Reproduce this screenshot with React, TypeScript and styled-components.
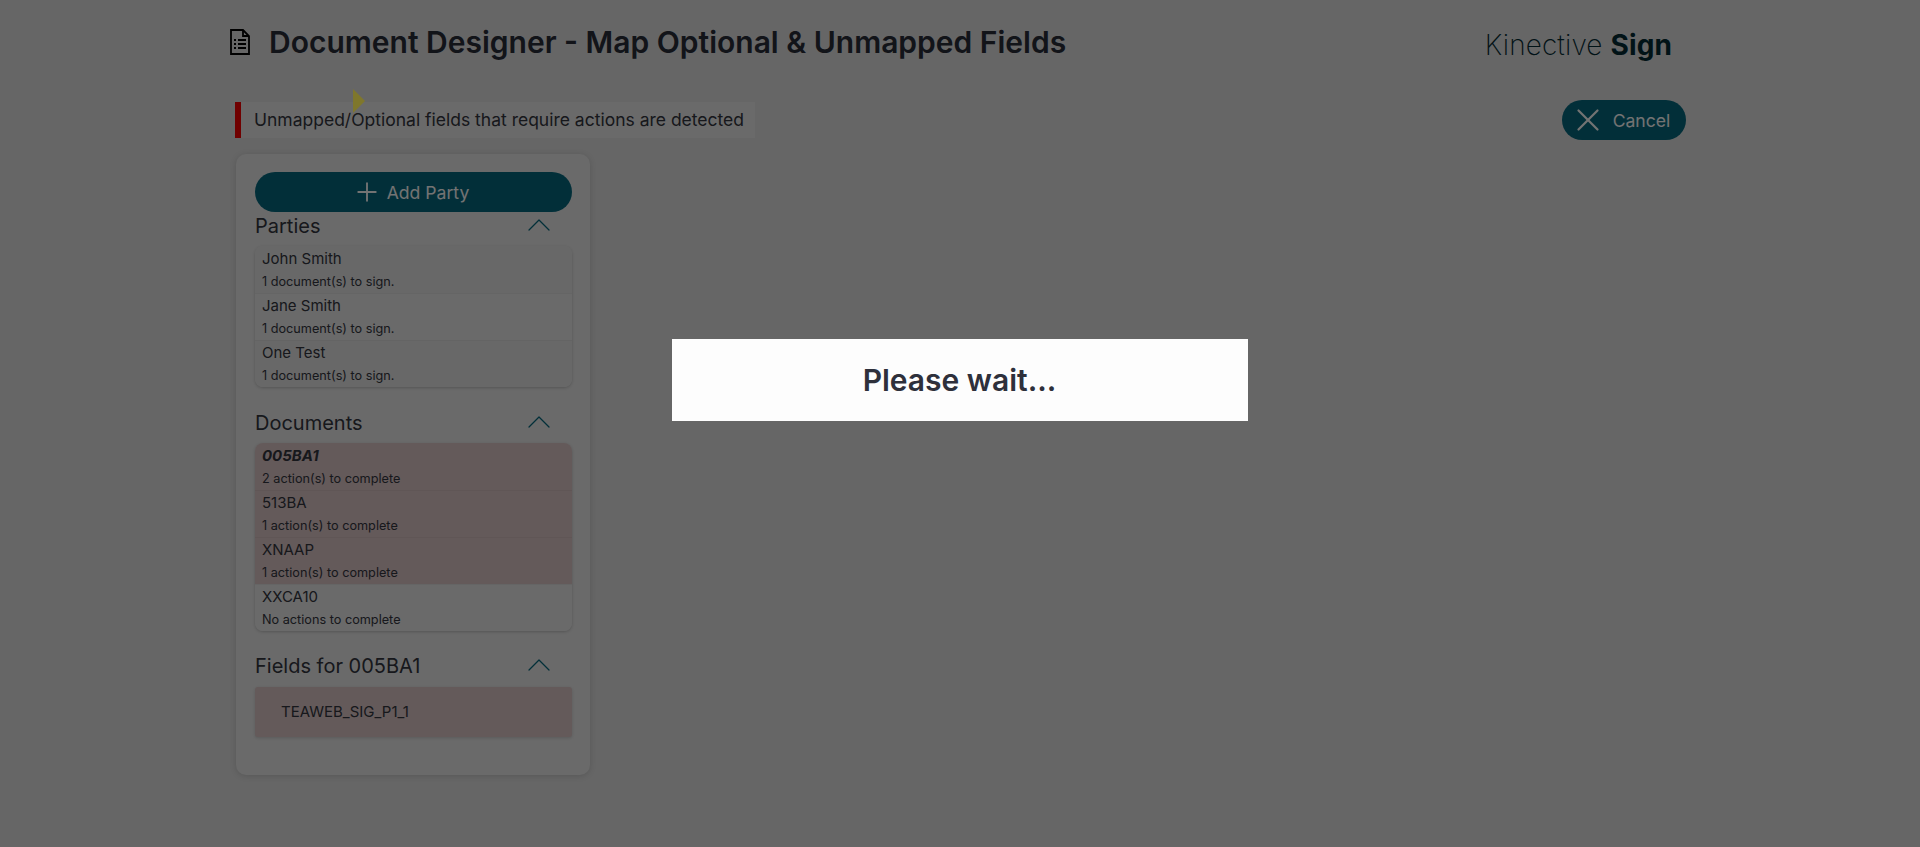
import { createGlobalStyle } from "styled-components";
import styled from "styled-components";
import { Plus, X, ChevronUp } from "lucide-react";

const GlobalStyle = createGlobalStyle`
  html, body {
    margin: 0;
    padding: 0;
    background: #cccccc;
    font-family: Inter, "Liberation Sans", sans-serif;
    color: #2e3038;
  }
`

const Page = styled.div`
  height: 847px;
  overflow: hidden;
  padding: 0 234px 0 228px;
  box-sizing: border-box;
`
const Header = styled.header`
  display: flex;
  justify-content: space-between;
  height: 102px;
`
const TitleGroup = styled.div`
  display: flex;
  align-items: flex-start;
  gap: 17px;
  padding-top: 24px;
`
const DocIcon = styled.svg`
  width: 24px;
  height: 28px;
  margin-top: 4px;
`
const Title = styled.h1`
  margin: 0;
  font-size: 30px;
  line-height: 36px;
  font-weight: 600;
  color: #252833;
`
const Logo = styled.div`
  font-size: 28px;
  line-height: 36px;
  font-weight: 200;
  letter-spacing: 0.1px;
  color: #02262e;
  padding: 27px 14px 0 0;
`
const LogoStrong = styled.span`
  font-weight: 700;
`
const ActionRow = styled.div`
  display: flex;
  justify-content: space-between;
  align-items: flex-start;
  height: 52px;
`
const Alert = styled.div`
  margin-left: 7px;
  width: 520px;
  height: 36px;
  box-sizing: border-box;
  display: flex;
  align-items: center;
  padding: 0 0 2px 13px;
  border-left: 6px solid #e00000;
  background: #d5d5d5;
  font-size: 17.5px;
  color: #2e3038;
`
const PillButton = styled.button`
  display: flex;
  align-items: center;
  justify-content: center;
  height: 40px;
  padding: 0;
  border: 0;
  border-radius: 20px;
  background: #045f73;
  color: #e6e6e6;
  font-family: inherit;
  font-size: 17.6px;
`
const CancelButton = styled(PillButton)`
  width: 124px;
  margin-top: -2px;
  gap: 6px;
  svg {
    margin: -4px 0 -4px -9px;
  }
`
const Card = styled.aside`
  margin-left: 8px;
  width: 354px;
  height: 621px;
  box-sizing: border-box;
  padding: 18px 18px 18px 19px;
  background: #d4d4d4;
  border-radius: 10px;
  box-shadow: 0 1px 6px rgba(0, 0, 0, 0.15);
`
const AddButton = styled(PillButton)`
  width: 100%;
  gap: 5px;
  svg {
    margin: -4px 0 -4px -6px;
  }
`
const SectionHead = styled.div<{ $top: number }>`
  display: flex;
  justify-content: space-between;
  align-items: center;
  height: 30px;
  margin-top: ${(p) => p.$top}px;
  font-size: 20px;
  color: #2e3038;
`
const Chevron = styled(ChevronUp)`
  width: 40px;
  height: 40px;
  margin: -10px 13px -8px 0;
  color: #045f73;
`
const List = styled.div`
  margin-top: 5px;
  border-radius: 8px;
  overflow: hidden;
  box-shadow: 0 1px 3px rgba(0, 0, 0, 0.2);
  background: #d4d4d4;
`
const Row = styled.div<{ $alert?: boolean; $shade?: boolean }>`
  height: 47px;
  box-sizing: border-box;
  padding: 2px 7px 0;
  background: ${(p) => (p.$alert ? "#c8b4b4" : p.$shade ? "#d1d1d1" : "#d4d4d4")};
  & + & {
    padding-top: 1px;
    border-top: 1px solid rgba(0, 0, 0, 0.04);
  }
`
const RowName = styled.div<{ $active?: boolean }>`
  font-size: 15px;
  line-height: 22px;
  color: #2e3038;
  font-weight: ${(p) => (p.$active ? 700 : 400)};
  font-style: ${(p) => (p.$active ? "italic" : "normal")};
`
const RowSub = styled.div`
  font-size: 12.7px;
  line-height: 24px;
  color: #2e3038;
`
const FieldBox = styled.div`
  margin-top: 6px;
  height: 50px;
  box-sizing: border-box;
  display: flex;
  align-items: center;
  padding: 0 0 2px 26px;
  border-radius: 3px;
  background: #c8b4b4;
  box-shadow: 0 1px 3px rgba(0, 0, 0, 0.15);
  font-size: 15px;
  color: #2e3038;
`
const Triangle = styled.div`
  position: absolute;
  left: 353px;
  top: 89px;
  width: 0;
  height: 0;
  border-left: 12px solid #ffee58;
  border-top: 12px solid transparent;
  border-bottom: 12px solid transparent;
`
const Overlay = styled.div`
  position: fixed;
  inset: 0;
  background: rgba(0, 0, 0, 0.5);
  display: flex;
  justify-content: center;
  align-items: flex-start;
`
const Dialog = styled.div`
  margin: 339px 1px 0 0;
  width: 576px;
  height: 82px;
  display: flex;
  align-items: center;
  justify-content: center;
  background: #fdfdfd;
  font-size: 30px;
  font-weight: 600;
  color: #2e303b;
`

const parties = ["John Smith", "Jane Smith", "One Test"]
const documents = [
  { name: "005BA1", sub: "2 action(s) to complete", alert: true, active: true },
  { name: "513BA", sub: "1 action(s) to complete", alert: true },
  { name: "XNAAP", sub: "1 action(s) to complete", alert: true },
  { name: "XXCA10", sub: "No actions to complete" },
]

export default function App() {
  return (
    <>
      <GlobalStyle />
      <Page>
        <Header>
          <TitleGroup>
            <DocIcon viewBox="0 0 24 28" fill="none" stroke="#000" strokeWidth="1.8">
              <path d="M3 2h12l6 6v18H3z" />
              <path d="M15 2v6h6" />
              <path d="M10 12h8M10 16h8M10 20h8M6 12h2M6 16h2M6 20h2" />
            </DocIcon>
            <Title>Document Designer - Map Optional &amp; Unmapped Fields</Title>
          </TitleGroup>
          <Logo>
            Kinective <LogoStrong>Sign</LogoStrong>
          </Logo>
        </Header>
        <ActionRow>
          <Alert>Unmapped/Optional fields that require actions are detected</Alert>
          <CancelButton>
            <X size={38} strokeWidth={1.4} />
            Cancel
          </CancelButton>
        </ActionRow>
        <Card>
          <AddButton>
            <Plus size={30} strokeWidth={1.5} />
            Add Party
          </AddButton>
          <SectionHead $top={-1}>
            Parties
            <Chevron strokeWidth={0.75} />
          </SectionHead>
          <List>
            {parties.map((name, i) => (
              <Row key={name} $shade={i !== 1}>
                <RowName>{name}</RowName>
                <RowSub>1 document(s) to sign.</RowSub>
              </Row>
            ))}
          </List>
          <SectionHead $top={21}>
            Documents
            <Chevron strokeWidth={0.75} />
          </SectionHead>
          <List>
            {documents.map((d) => (
              <Row key={d.name} $alert={d.alert}>
                <RowName $active={d.active}>{d.name}</RowName>
                <RowSub>{d.sub}</RowSub>
              </Row>
            ))}
          </List>
          <SectionHead $top={20}>
            Fields for 005BA1
            <Chevron strokeWidth={0.75} />
          </SectionHead>
          <FieldBox>TEAWEB_SIG_P1_1</FieldBox>
        </Card>
      </Page>
      <Triangle />
      <Overlay>
        <Dialog>Please wait...</Dialog>
      </Overlay>
    </>
  )
}
